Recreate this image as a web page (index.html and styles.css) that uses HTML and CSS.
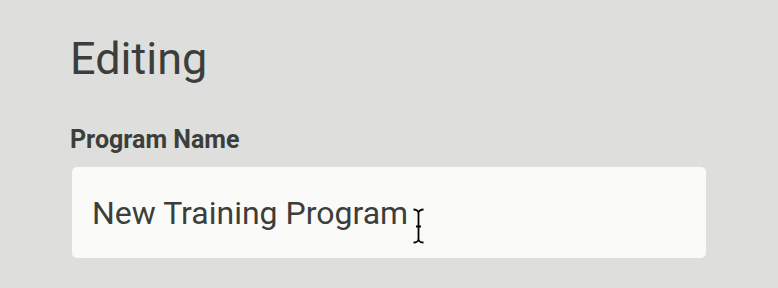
FILE: index.html
```html
<!DOCTYPE html>
<html lang="en">
<head>
<meta charset="utf-8">
<title>Editing</title>
<link rel="stylesheet" href="styles.css">
</head>
<body>
<main class="page">
  <h1 class="title">Editing</h1>
  <label class="label">Program Name</label>
  <div class="field">
    <span class="field-text">New Training Program</span>
    <svg class="ibeam" width="14" height="36" viewBox="0 0 14 36" aria-hidden="true">
      <path d="M1.5 1.5 C3.5 1.5 6.5 2.5 6.5 5 L6.5 31 C6.5 33.5 3.5 34.5 1.5 34.5 M11.5 1.5 C9.5 1.5 6.5 2.5 6.5 5 M6.5 31 C6.5 33.5 9.5 34.5 11.5 34.5 M4 18.5 L9 18.5" fill="none" stroke="#000" stroke-width="1.8"/>
    </svg>
  </div>
</main>
</body>
</html>
```

FILE: styles.css
```css
html, body {
  margin: 0;
  padding: 0;
  background: #dedfdc;
}
body {
  font-family: Roboto, "Liberation Sans", sans-serif;
  color: #3c3e3b;
}
.page {
  display: flex;
  flex-direction: column;
  align-items: flex-start;
  padding: 32px 0 0 70px;
  width: 634px;
}
.title {
  margin: 0;
  font-size: 45px;
  font-weight: 400;
  line-height: 54px;
}
.label {
  margin-top: 39px;
  font-size: 25px;
  font-weight: 700;
  line-height: 30px;
}
.field {
  position: relative;
  margin-top: 12px;
  margin-left: 2px;
  box-sizing: border-box;
  width: 634px;
  height: 91px;
  display: flex;
  align-items: center;
  padding-left: 20px;
  background: #fafbf9;
  border-radius: 5px;
}
.field-text {
  font-size: 32px;
  line-height: 38px;
}
.ibeam {
  position: absolute;
  left: 340px;
  top: 41px;
}
```
